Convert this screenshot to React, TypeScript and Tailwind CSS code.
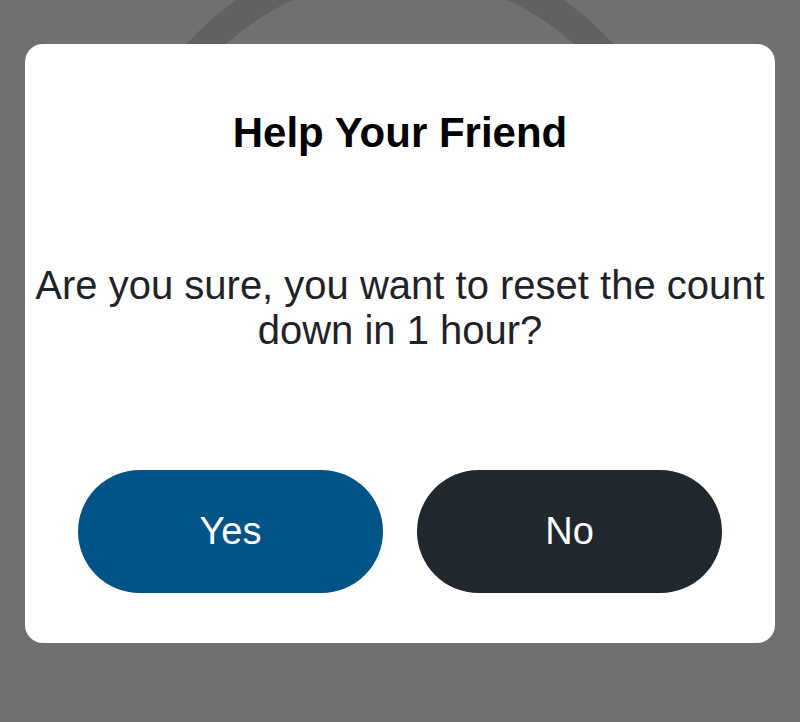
export default function App() {
  return (
    <div className="relative w-[800px] h-[722px] overflow-hidden bg-[#707070] font-['Liberation_Sans',Arial,sans-serif]">
      {/* background ring behind the dialog */}
      <div className="absolute left-[113px] top-[-51px] w-[574px] h-[574px] rounded-full border-[28px] border-[#616161]" />

      <div className="relative mx-[25px] mt-[44px] h-[599px] rounded-[18px] bg-white flex flex-col items-center">
        <h1 className="pt-[64px] text-[42px] leading-[50px] font-bold text-black">
          Help Your Friend
        </h1>
        <p className="mt-[105px] text-[40px] leading-[45px] text-[#1f2329] text-center">
          Are you sure, you want to reset the count down in 1 hour?
        </p>
        <div className="mt-auto mb-[50px] flex gap-[34px]">
          <button className="w-[305px] h-[123px] rounded-full bg-[#005386] text-white text-[38px]">
            Yes
          </button>
          <button className="w-[305px] h-[123px] rounded-full bg-[#21272f] text-white text-[38px]">
            No
          </button>
        </div>
      </div>
    </div>
  )
}
